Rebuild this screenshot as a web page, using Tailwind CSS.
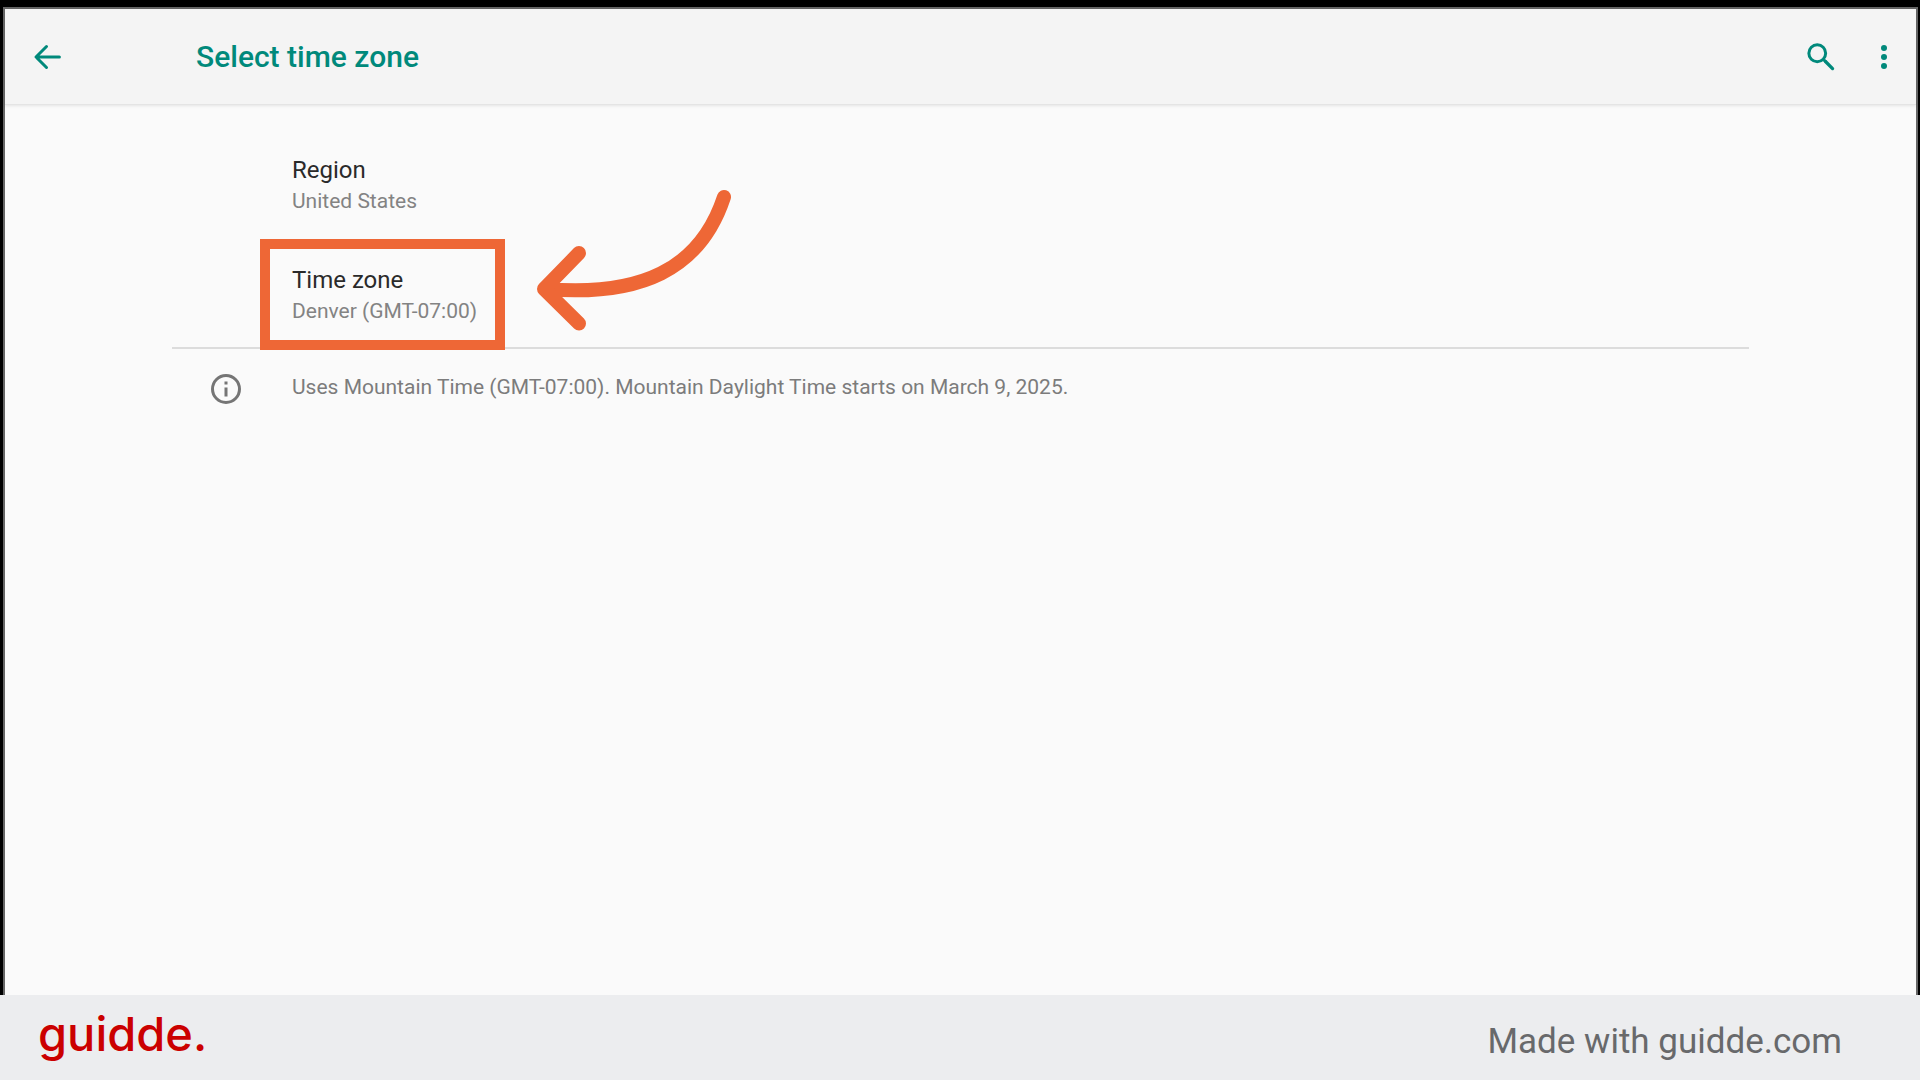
<!DOCTYPE html>
<html lang="en">
<head>
<meta charset="utf-8">
<title>Select time zone</title>
<script src="https://cdn.jsdelivr.net/npm/@tailwindcss/browser@4"></script>
</head>
<body class="flex min-h-screen flex-col bg-black font-['Roboto',sans-serif]">
  <div class="mr-0.5 ml-[3px] mt-[7px] flex grow flex-col border-x-2 border-t-2 border-[#666666] bg-[#fafafa]">
    <header class="flex h-24 items-center border-b border-[#e4e4e4] bg-[#f4f4f4] pr-[14px] pl-[25px] text-[#00897b] shadow-[0_1px_3px_rgba(0,0,0,0.09)]">
      <button type="button" aria-label="Back" class="size-9">
        <svg viewBox="0 0 24 24" class="size-9" fill="none" stroke="currentColor" stroke-width="2" stroke-linecap="round" stroke-linejoin="round"><path d="M11 5 4 12l7 7M4.200 12h15.400"/></svg>
      </button>
      <h1 class="ml-[130px] grow text-[30px] leading-9 font-medium">Select time zone</h1>
      <button type="button" aria-label="Search" class="mr-[27px] size-9">
        <svg viewBox="0 0 24 24" class="size-9" fill="none" stroke="currentColor" stroke-width="2"><circle cx="9.5" cy="9.5" r="5.6"/><path d="m13.800 13.800 1.400 1.400"/><path d="m15 15 4.700 4.700" stroke-width="2.200" stroke-linecap="round"/></svg>
      </button>
      <button type="button" aria-label="More options" class="size-9">
        <svg viewBox="0 0 24 24" class="size-9" fill="currentColor"><circle cx="12" cy="6" r="2"/><circle cx="12" cy="12" r="2"/><circle cx="12" cy="18" r="2"/></svg>
      </button>
    </header>

    <main class="mx-[167px] pt-6">
      <button type="button" class="flex h-[110px] w-full flex-col pt-[25px] pl-[120px] text-left">
        <span class="text-2xl leading-8 text-[#2a2a2a]">Region</span>
        <span class="text-[21px] leading-[30px] text-[#838383]">United States</span>
      </button>
      <div class="relative border-b-2 border-[#dcdcdc]">
        <button type="button" class="flex h-[108px] w-full flex-col pt-[25px] pl-[120px] text-left">
          <span class="text-2xl leading-8 text-[#2a2a2a]">Time zone</span>
          <span class="text-[21px] leading-[30px] text-[#838383]">Denver (GMT-07:00)</span>
        </button>
        <div class="pointer-events-none absolute top-0 left-[88px] h-[111px] w-[245px] border-10 border-[#ee6736]"></div>
        <svg viewBox="0 0 220 160" class="pointer-events-none absolute -top-[59px] left-[358px] h-[160px] w-[220px]" fill="none" stroke="#ee6736" stroke-width="14" stroke-linecap="round" stroke-linejoin="round"><path d="M194 17C170 90 110 117 15 109"/><path d="M49 73 14 109l35 34.500"/></svg>
      </div>
      <div class="flex items-start pt-[22px] pl-9">
        <svg viewBox="0 0 24 24" class="size-9" fill="#757575"><circle cx="12" cy="12" r="9" fill="none" stroke="#757575" stroke-width="2"/><path d="M11 7h2v2h-2zM11 11h2v6h-2z"/></svg>
        <p class="mt-0.5 ml-12 text-[21px] leading-7 text-[#7c7c7c]">Uses Mountain Time (GMT-07:00). Mountain Daylight Time starts on March 9, 2025.</p>
      </div>
    </main>
  </div>

  <footer class="flex h-[85px] items-center justify-between bg-[#ecedef] pr-[78px] pl-[38px]">
    <a href="#" class="pb-2 font-['Inter',sans-serif] text-[47px] leading-14 font-medium text-[#cb0000]">guidde.</a>
    <p class="pt-2 text-[35px] leading-10 text-[#68696b]">Made with guidde.com</p>
  </footer>
</body>
</html>
